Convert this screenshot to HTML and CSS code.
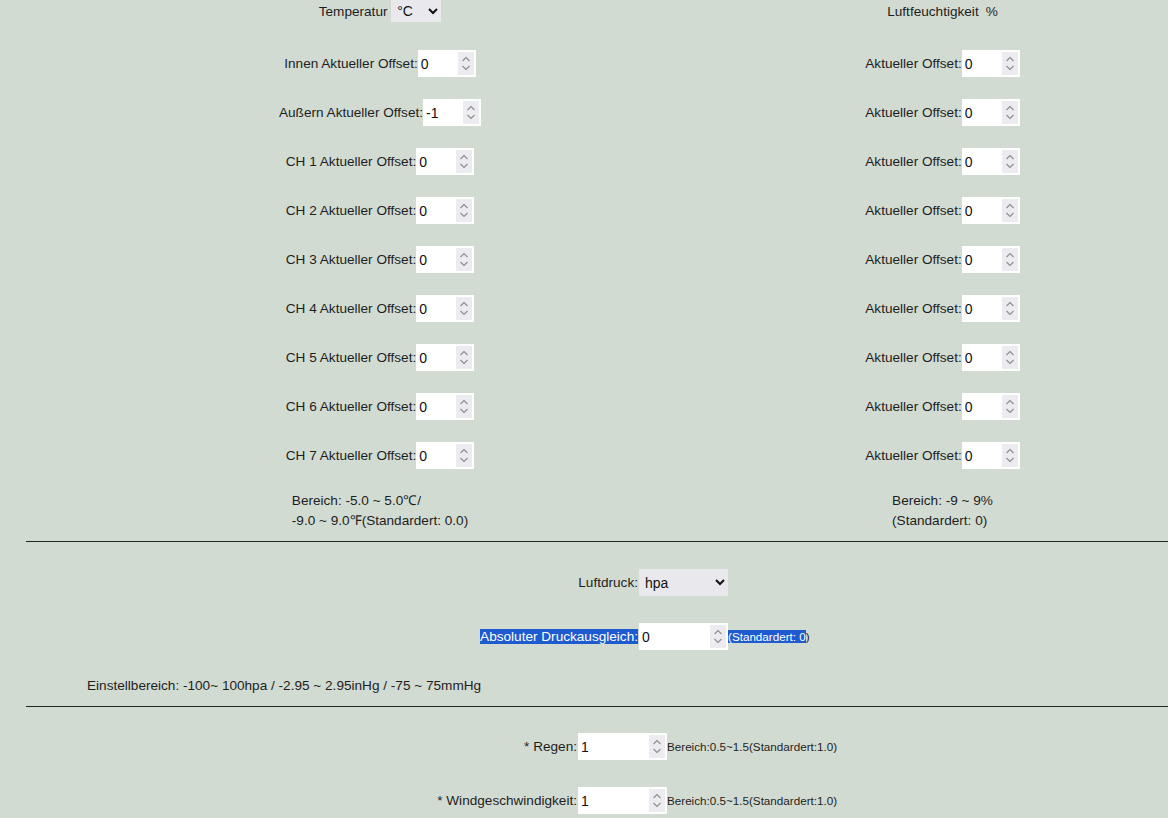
FILE: index.html
```html
<!DOCTYPE html>
<html lang="de">
<head>
<meta charset="utf-8">
<title>Kalibrierung</title>
<link rel="stylesheet" href="styles.css">
</head>
<body>
<svg width="0" height="0" class="defs" aria-hidden="true">
  <symbol id="spin" viewBox="0 0 16 23">
    <path d="M4.5 9 L8 5.5 L11.5 9" fill="none" stroke="#8c8c8c" stroke-width="1.1"/>
    <path d="M4.5 14 L8 17.5 L11.5 14" fill="none" stroke="#8c8c8c" stroke-width="1.1"/>
  </symbol>
</svg>
<div class="sensors">
  <div class="cell head">Temperatur&nbsp;<select class="sel-temp"><option>°C</option><option>°F</option></select></div>
  <div class="cell head">Luftfeuchtigkeit<span class="pct">%</span></div>

  <div class="cell"><label>Innen Aktueller Offset:</label><span class="nw"><input class="num" type="number" value="0"><svg class="spin"><use href="#spin"/></svg></span></div>
  <div class="cell"><label>Aktueller Offset:</label><span class="nw"><input class="num" type="number" value="0"><svg class="spin"><use href="#spin"/></svg></span></div>

  <div class="cell"><label>Außern Aktueller Offset:</label><span class="nw"><input class="num" type="number" value="-1"><svg class="spin"><use href="#spin"/></svg></span></div>
  <div class="cell"><label>Aktueller Offset:</label><span class="nw"><input class="num" type="number" value="0"><svg class="spin"><use href="#spin"/></svg></span></div>

  <div class="cell"><label>CH 1 Aktueller Offset:</label><span class="nw"><input class="num" type="number" value="0"><svg class="spin"><use href="#spin"/></svg></span></div>
  <div class="cell"><label>Aktueller Offset:</label><span class="nw"><input class="num" type="number" value="0"><svg class="spin"><use href="#spin"/></svg></span></div>

  <div class="cell"><label>CH 2 Aktueller Offset:</label><span class="nw"><input class="num" type="number" value="0"><svg class="spin"><use href="#spin"/></svg></span></div>
  <div class="cell"><label>Aktueller Offset:</label><span class="nw"><input class="num" type="number" value="0"><svg class="spin"><use href="#spin"/></svg></span></div>

  <div class="cell"><label>CH 3 Aktueller Offset:</label><span class="nw"><input class="num" type="number" value="0"><svg class="spin"><use href="#spin"/></svg></span></div>
  <div class="cell"><label>Aktueller Offset:</label><span class="nw"><input class="num" type="number" value="0"><svg class="spin"><use href="#spin"/></svg></span></div>

  <div class="cell"><label>CH 4 Aktueller Offset:</label><span class="nw"><input class="num" type="number" value="0"><svg class="spin"><use href="#spin"/></svg></span></div>
  <div class="cell"><label>Aktueller Offset:</label><span class="nw"><input class="num" type="number" value="0"><svg class="spin"><use href="#spin"/></svg></span></div>

  <div class="cell"><label>CH 5 Aktueller Offset:</label><span class="nw"><input class="num" type="number" value="0"><svg class="spin"><use href="#spin"/></svg></span></div>
  <div class="cell"><label>Aktueller Offset:</label><span class="nw"><input class="num" type="number" value="0"><svg class="spin"><use href="#spin"/></svg></span></div>

  <div class="cell"><label>CH 6 Aktueller Offset:</label><span class="nw"><input class="num" type="number" value="0"><svg class="spin"><use href="#spin"/></svg></span></div>
  <div class="cell"><label>Aktueller Offset:</label><span class="nw"><input class="num" type="number" value="0"><svg class="spin"><use href="#spin"/></svg></span></div>

  <div class="cell"><label>CH 7 Aktueller Offset:</label><span class="nw"><input class="num" type="number" value="0"><svg class="spin"><use href="#spin"/></svg></span></div>
  <div class="cell"><label>Aktueller Offset:</label><span class="nw"><input class="num" type="number" value="0"><svg class="spin"><use href="#spin"/></svg></span></div>

  <div class="note-cell"><div class="note">Bereich: -5.0 ~ 5.0℃/<br>-9.0 ~ 9.0℉(Standardert: 0.0)</div></div>
  <div class="note-cell"><div class="note">Bereich: -9 ~ 9%<br>(Standardert: 0)</div></div>
</div>

<hr class="rule">

<div class="pressure">
  <div class="lbl">Luftdruck:</div>
  <div class="ctl"><select class="sel-press"><option>hpa</option><option>inHg</option><option>mmHg</option></select></div>

  <div class="lbl"><span class="hl">Absoluter Druckausgleich:</span></div>
  <div class="ctl"><span class="nw"><input class="num wide" type="number" value="0"><svg class="spin"><use href="#spin"/></svg></span><span class="hl small">(Standardert: 0</span><span class="small">)</span></div>
</div>

<div class="range">Einstellbereich: -100~ 100hpa / -2.95 ~ 2.95inHg / -75 ~ 75mmHg</div>

<hr class="rule">

<div class="factors">
  <div class="lbl">* Regen:</div>
  <div class="ctl"><span class="nw"><input class="num wide" type="number" value="1"><svg class="spin"><use href="#spin"/></svg></span><span class="small">Bereich:0.5~1.5(Standardert:1.0)</span></div>

  <div class="lbl">* Windgeschwindigkeit:</div>
  <div class="ctl"><span class="nw"><input class="num wide" type="number" value="1"><svg class="spin"><use href="#spin"/></svg></span><span class="small">Bereich:0.5~1.5(Standardert:1.0)</span></div>
</div>
</body>
</html>
```

FILE: styles.css
```css
html, body {
  margin: 0;
  padding: 0;
}

body {
  background: #d2dbd2;
  font-family: "Liberation Sans", Arial, sans-serif;
  font-size: 13.6px;
  color: #1e1e1e;
  overflow: hidden;
}

.defs {
  position: absolute;
  width: 0;
  height: 0;
}

.sensors {
  display: grid;
  grid-template-columns: 760px 365px;
  row-gap: 22px;
}

.cell {
  display: flex;
  justify-content: center;
  align-items: center;
  height: 27px;
}

.cell.head {
  height: 22px;
  margin-bottom: 6px;
}

.pct {
  margin-left: 7px;
}

.nw {
  position: relative;
  display: inline-flex;
}

.num {
  box-sizing: border-box;
  width: 58px;
  height: 27px;
  border: none;
  border-radius: 0;
  background: #fff;
  padding: 0 3px;
  margin: 0;
  font-family: "Liberation Sans", Arial, sans-serif;
  font-size: 14px;
  color: #111;
  outline: none;
  -moz-appearance: textfield;
}

.num::-webkit-inner-spin-button,
.num::-webkit-outer-spin-button {
  -webkit-appearance: none;
  margin: 0;
}

.num.wide {
  width: 89px;
}

.spin {
  position: absolute;
  right: 2px;
  top: 2px;
  width: 16px;
  height: 23px;
  background: #ececf0;
}

.sel-temp {
  box-sizing: border-box;
  width: 50px;
  height: 22px;
  border: none;
  border-radius: 0;
  background-color: #e9e9ed;
  font-family: "Liberation Sans", Arial, sans-serif;
  font-size: 14px;
  color: #111;
  margin: 0;
  padding: 0 0 0 2px;
}

.sel-press {
  box-sizing: border-box;
  width: 89px;
  height: 27px;
  border: none;
  border-radius: 0;
  background-color: #e9e9ed;
  font-family: "Liberation Sans", Arial, sans-serif;
  font-size: 14px;
  color: #111;
  margin: 0;
  padding: 0 0 0 2px;
}

.note-cell {
  display: flex;
  justify-content: center;
}

.note {
  text-align: left;
  line-height: 20px;
}

.rule {
  border: none;
  border-top: 1px solid #1b2a1b;
  height: 0;
  margin: 10px 0 0 26px;
}

.pressure {
  display: grid;
  grid-template-columns: 638px auto;
  row-gap: 27px;
  align-items: center;
  margin-top: 27px;
}

.factors {
  display: grid;
  grid-template-columns: 577px auto;
  row-gap: 27px;
  align-items: center;
  margin-top: 26px;
}

.lbl {
  text-align: right;
  height: 27px;
  line-height: 27px;
}

.ctl {
  display: flex;
  align-items: center;
  height: 27px;
  padding-left: 1px;
}

.hl {
  background: #1e5bcf;
  color: #fff;
}

.small {
  font-size: 11.67px;
}

.range {
  margin-top: 26px;
  padding-left: 87px;
  line-height: 20px;
}
```
